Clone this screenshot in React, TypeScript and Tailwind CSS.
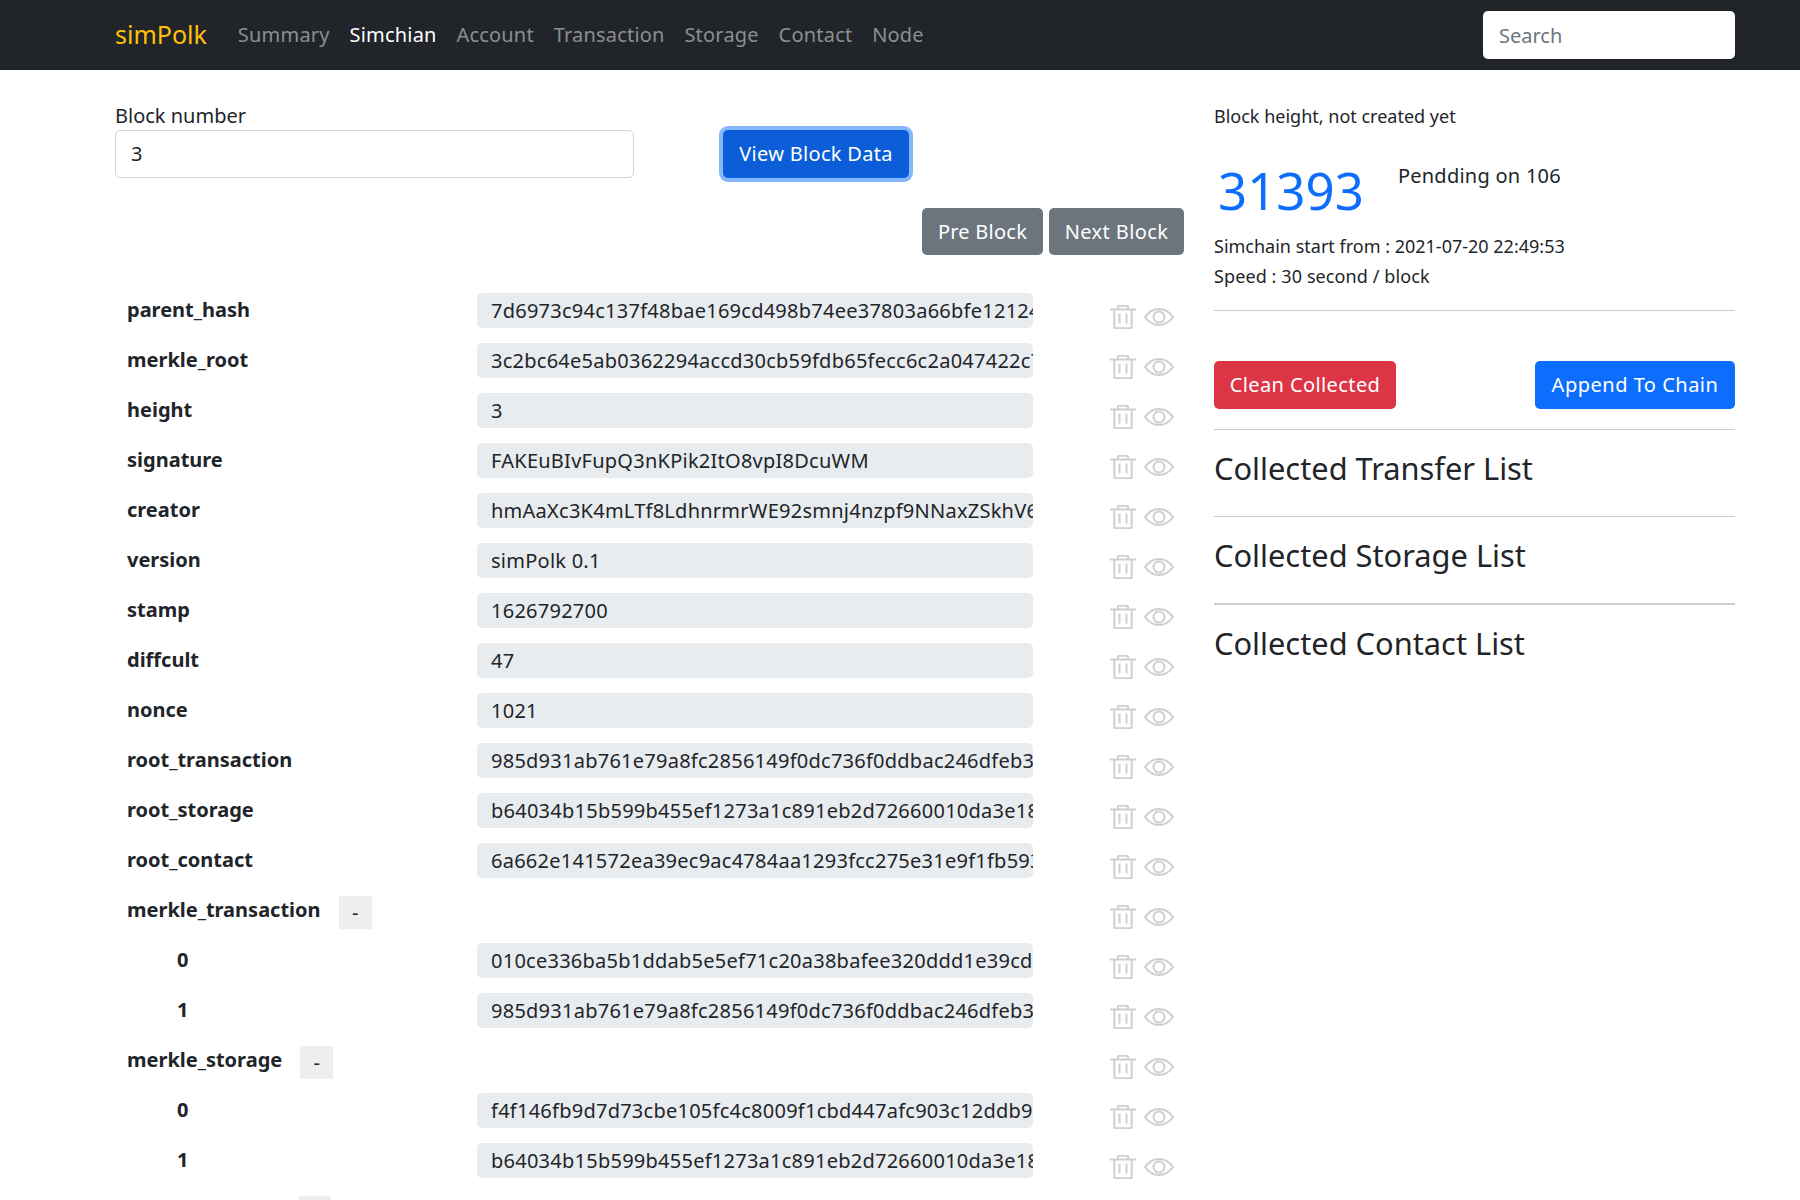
const font = { fontFamily: '"Noto Sans", sans-serif' };

const navLinks = ["Summary", "Simchian", "Account", "Transaction", "Storage", "Contact", "Node"];

type Row = { label: string; value?: string; child?: boolean; toggle?: boolean };

const rows: Row[] = [
  { label: "parent_hash", value: "7d6973c94c137f48bae169cd498b74ee37803a66bfe12124a8c1" },
  { label: "merkle_root", value: "3c2bc64e5ab0362294accd30cb59fdb65fecc6c2a047422c7f05" },
  { label: "height", value: "3" },
  { label: "signature", value: "FAKEuBIvFupQ3nKPik2ItO8vpI8DcuWM" },
  { label: "creator", value: "hmAaXc3K4mLTf8LdhnrmrWE92smnj4nzpf9NNaxZSkhV6x2q" },
  { label: "version", value: "simPolk 0.1" },
  { label: "stamp", value: "1626792700" },
  { label: "diffcult", value: "47" },
  { label: "nonce", value: "1021" },
  { label: "root_transaction", value: "985d931ab761e79a8fc2856149f0dc736f0ddbac246dfeb3a1d4" },
  { label: "root_storage", value: "b64034b15b599b455ef1273a1c891eb2d72660010da3e18c04b7" },
  { label: "root_contact", value: "6a662e141572ea39ec9ac4784aa1293fcc275e31e9f1fb593e20" },
  { label: "merkle_transaction", toggle: true },
  { label: "0", child: true, value: "010ce336ba5b1ddab5e5ef71c20a38bafee320ddd1e39cd5f862" },
  { label: "1", child: true, value: "985d931ab761e79a8fc2856149f0dc736f0ddbac246dfeb3a1d4" },
  { label: "merkle_storage", toggle: true },
  { label: "0", child: true, value: "f4f146fb9d7d73cbe105fc4c8009f1cbd447afc903c12ddb9a37" },
  { label: "1", child: true, value: "b64034b15b599b455ef1273a1c891eb2d72660010da3e18c04b7" },
];

function TrashIcon() {
  return (
    <svg width="26" height="24" viewBox="0 0 26 24" fill="none" stroke="#cfcfcf" strokeWidth="2">
      <path d="M0 4.500h26" />
      <path d="M8 4.500V1.800a1 1 0 0 1 1-1h8a1 1 0 0 1 1 1v2.700" />
      <path d="M4.300 4.500v17.500a1.300 1.300 0 0 0 1.300 1.300h14.800a1.300 1.300 0 0 0 1.300-1.300V4.500" />
      <path d="M9.500 8.500v10M16.500 8.500v10" />
    </svg>
  );
}

function EyeIcon() {
  return (
    <svg width="30" height="18" viewBox="0 0 30 18" fill="none" stroke="#cfcfcf" strokeWidth="2">
      <path d="M1 9C5 3.400 10 1 15 1S25 3.400 29 9C25 14.600 20 17 15 17S5 14.600 1 9z" />
      <circle cx="15" cy="9" r="5.500" />
    </svg>
  );
}

function BlockRow({ row }: { row: Row }) {
  return (
    <div className="flex h-[50px] items-center">
      <div className={`flex w-[362px] shrink-0 items-center font-bold ${row.child ? "pl-[62px]" : "pl-[12px]"}`}>
        <span>{row.label}</span>
        {row.toggle && (
          <span className="ml-[18px] mt-[5px] flex h-[33px] w-[33px] items-center justify-center bg-[#eeeeee] text-[20px] font-normal">-</span>
        )}
      </div>
      <div className="w-[556px] shrink-0">
        {row.value && (
          <div className="h-[35px] overflow-hidden whitespace-nowrap rounded-[5px] bg-[#e9ecef] pl-[14px] leading-[35px] tracking-[0.25px]">
            {row.value}
          </div>
        )}
      </div>
      <div className="ml-[77px] flex items-center gap-[8px] pt-[14px]">
        <TrashIcon />
        <EyeIcon />
      </div>
    </div>
  );
}

export default function App() {
  return (
    <div className="h-[1200px] overflow-hidden bg-white text-[20px] text-[#212529]" style={font}>
      <nav className="flex h-[70px] items-center bg-[#212529] pl-[115px] pr-[65px]">
        <span className="mr-[31px] text-[25px] text-[#ffc107]">simPolk</span>
        <div className="flex gap-[19.800px] tracking-[0.2px]">
          {navLinks.map((link) => (
            <a key={link} className={link === "Simchian" ? "text-white" : "text-[#8c8e91]"}>
              {link}
            </a>
          ))}
        </div>
        <input
          placeholder="Search"
          className="ml-auto h-[48px] w-[252px] rounded-[5px] bg-white px-[16px] outline-none placeholder:text-[#6c757d]"
        />
      </nav>

      <div className="flex pl-[115px] pr-[65px] pt-[35px]">
        <div className="w-[1069px] shrink-0">
          <div className="flex items-start">
            <div className="w-[519px]">
              <div className="mb-[4px] leading-[21px]">Block number</div>
              <div className="h-[48px] rounded-[5px] border border-[#ced4da] pl-[15px] leading-[46px]">3</div>
            </div>
            <button className="ml-[89px] mt-[25px] h-[48px] w-[186px] rounded-[5px] bg-[#0b5ed7] tracking-[0.3px] text-white ring-[4px] ring-[#86b7fe]">
              View Block Data
            </button>
          </div>
          <div className="mt-[30px] flex justify-end gap-[6px]">
            <button className="h-[47px] w-[121px] rounded-[5px] bg-[#6c757d] tracking-[0.25px] text-white">Pre Block</button>
            <button className="h-[47px] w-[135px] rounded-[5px] bg-[#6c757d] tracking-[0.4px] text-white">Next Block</button>
          </div>
          <div className="mt-[30px]">
            {rows.map((row, i) => (
              <BlockRow key={i} row={row} />
            ))}
            <div className="ml-[184px] mt-[11px] h-[33px] w-[32px] bg-[#eeeeee]" />
          </div>
        </div>

        <div className="ml-[30px] flex-1">
          <p className="text-[18px] leading-[22px]">Block height, not created yet</p>
          <div className="mt-[32px] flex items-start">
            <span className="pl-[4px] text-[51px] leading-[62px] text-[#0d6efd]">31393</span>
            <span className="ml-[34px] mt-[2px] leading-[30px] tracking-[0.25px]">Pendding on 106</span>
          </div>
          <p className="mt-[10px] text-[18px] leading-[30px]">Simchain start from : 2021-07-20 22:49:53</p>
          <p className="text-[18px] leading-[30px] tracking-[0.1px]">Speed : 30 second / block</p>
          <hr className="mt-[19px] border-[#cccccc]" />
          <div className="mt-[50px] flex justify-between">
            <button className="h-[48px] w-[182px] rounded-[5px] bg-[#dc3545] tracking-[0.4px] text-white">Clean Collected</button>
            <button className="h-[48px] w-[200px] rounded-[5px] bg-[#0d6efd] tracking-[0.5px] text-white">Append To Chain</button>
          </div>
          <hr className="mt-[20px] border-[#cccccc]" />
          <h4 className="pb-[29px] pt-[19px] text-[30.800px] leading-[38px]">Collected Transfer List</h4>
          <hr className="border-[#cccccc]" />
          <h4 className="pb-[29px] pt-[19px] text-[30.800px] leading-[38px]">Collected Storage List</h4>
          <hr className="border-t-2 border-[#cccccc]" />
          <h4 className="pb-[29px] pt-[19px] text-[30.800px] leading-[38px]">Collected Contact List</h4>
        </div>
      </div>
    </div>
  );
}
